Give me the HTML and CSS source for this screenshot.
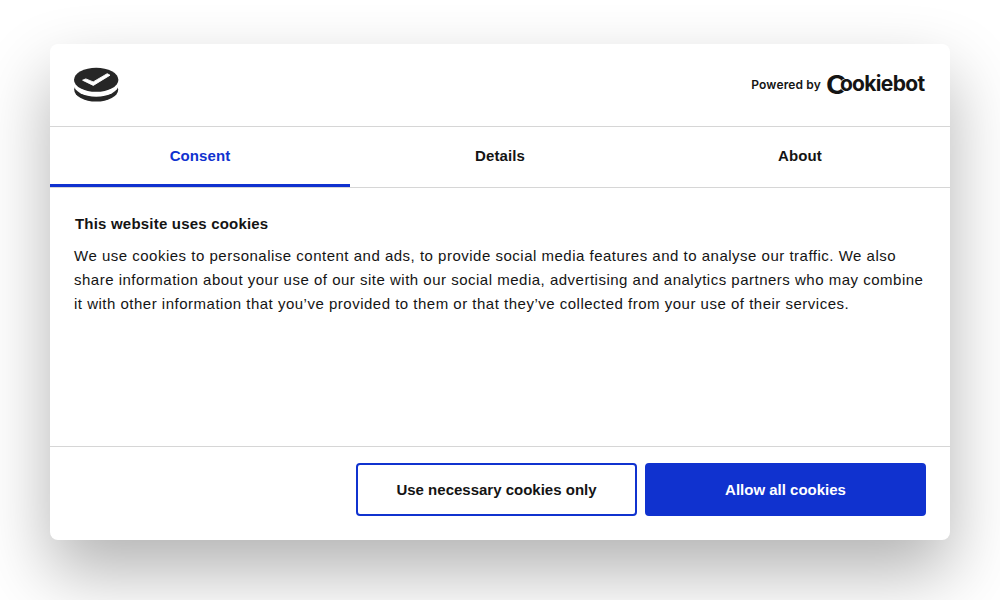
FILE: index.html
```html
<!DOCTYPE html>
<html lang="en">
<head>
  <meta charset="UTF-8">
  <meta name="viewport" content="width=device-width, initial-scale=1.0">
  <title>Cookie consent</title>
  <link rel="stylesheet" href="styles.css">
</head>
<body>
  <div class="dialog" role="dialog" aria-labelledby="dialog-title">
    <header class="dialog-header">
      <svg class="logo" width="46" height="36" viewBox="0 0 46 36" aria-hidden="true">
        <ellipse cx="23.2" cy="22.6" rx="22" ry="12" fill="#262626"/>
        <ellipse cx="23.2" cy="17.7" rx="22.4" ry="12" fill="#fff"/>
        <ellipse cx="23.2" cy="12.8" rx="22.2" ry="12" fill="#262626"/>
        <path d="M9.6 13.2 L12.8 11.9 L20.2 14.9 L34.2 6.7 L37 8.2 L20.3 18.4 Z" fill="#fff" stroke="#fff" stroke-width="0.9"/>
      </svg>
      <div class="powered">
        <span class="powered-by">Powered by</span>
        <svg class="wordmark" width="100" height="36" viewBox="0 0 100 36">
          <text><tspan class="wordmark-c" x="-0.1" y="26" textLength="21" lengthAdjust="spacingAndGlyphs">C</tspan><tspan class="wordmark-rest wordmark-gap" x="14" y="23.3">o</tspan><tspan class="wordmark-rest" x="26">okiebot</tspan></text>
        </svg>
      </div>
    </header>

    <nav class="tabs">
      <a class="tab active" href="#consent">Consent</a>
      <a class="tab" href="#details">Details</a>
      <a class="tab" href="#about">About</a>
    </nav>

    <main class="dialog-body" id="consent">
      <h2 id="dialog-title">This website uses cookies</h2>
      <p>We use cookies to personalise content and ads, to provide social media features and to analyse our traffic. We also share information about your use of our site with our social media, advertising and analytics partners who may combine it with other information that you’ve provided to them or that they’ve collected from your use of their services.</p>
    </main>

    <footer class="dialog-footer">
      <button class="btn" type="button">Use necessary cookies only</button>
      <button class="btn btn-primary" type="button">Allow all cookies</button>
    </footer>
  </div>
</body>
</html>
```
FILE: styles.css
```css
* {
  box-sizing: border-box;
}

body {
  margin: 0;
  height: 600px;
  padding: 44px 50px 0;
  overflow: hidden;
  background: #fff;
  color: #141414;
  font-family: "Liberation Sans", Arial, sans-serif;
  font-size: 15px;
}

.dialog {
  display: flex;
  flex-direction: column;
  height: 495.7px;
  background: #fff;
  border-radius: 8px;
  box-shadow: 0 32px 68px rgba(0, 0, 0, 0.3);
}

.dialog-header {
  display: flex;
  justify-content: space-between;
  height: 83px;
  padding: 23px 24px 0 23px;
  border-bottom: 1px solid #d6d6d6;
}

.powered {
  display: flex;
  gap: 5px;
}

.powered-by {
  padding-top: 10px;
  font-family: Inter, sans-serif;
  font-size: 12px;
  font-weight: 600;
  line-height: 16px;
  letter-spacing: 0.15px;
}

.wordmark {
  margin-top: 1px;
  overflow: visible;
}

.wordmark text {
  fill: #141414;
  font-family: Inter, sans-serif;
  font-weight: 700;
}

.wordmark-c {
  font-size: 25px;
}

.wordmark-rest {
  font-size: 21px;
  letter-spacing: -0.65px;
}

/* keeps the first "o" apart from the big C */
.wordmark-gap {
  stroke: #fff;
  stroke-width: 1px;
  paint-order: stroke;
}

.tabs {
  display: flex;
  height: 61px;
  border-bottom: 1px solid #d6d6d6;
}

.tab {
  flex: 1;
  height: 60px;
  padding-top: 20px;
  color: #141414;
  font-weight: bold;
  line-height: 18px;
  letter-spacing: 0.1px;
  text-align: center;
  text-decoration: none;
}

.tab.active {
  color: #1032cf;
  border-bottom: 3px solid #1032cf;
}

.dialog-body {
  flex: 1;
  padding: 24px 24px 0;
}

.dialog-body h2 {
  margin: 0 0 8px 1px;
  font-size: 15px;
  line-height: 24px;
  letter-spacing: 0.2px;
}

.dialog-body p {
  margin: 0;
  line-height: 24px;
  letter-spacing: 0.5px;
}

.dialog-footer {
  display: flex;
  justify-content: flex-end;
  gap: 8px;
  height: 94px;
  padding: 16px 24px 0;
  border-top: 1px solid #d6d6d6;
}

.btn {
  width: 281px;
  height: 53px;
  padding: 0;
  background: #fff;
  border: 2px solid #1032cf;
  border-radius: 4px;
  color: #141414;
  font: bold 15px "Liberation Sans", Arial, sans-serif;
  cursor: pointer;
}

.btn-primary {
  background: #1032cf;
  color: #fff;
}
```
